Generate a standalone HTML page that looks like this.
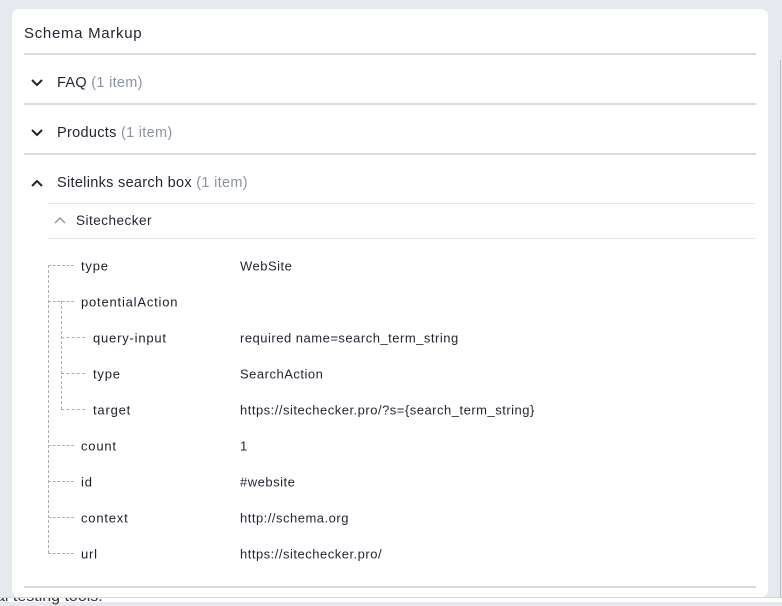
<!DOCTYPE html>
<html><head><style>
body{margin:0;width:782px;height:601px;background:#e6e9ee;font-family:"Liberation Sans",sans-serif;position:relative;overflow:hidden;color:#1f2430}
.card{position:absolute;left:12px;top:9px;width:756px;height:588px;background:#fff;border-radius:7px}
.hl{position:absolute;left:24px;width:732px;height:2px;background:#d8dbe1}
.sl{position:absolute;left:48px;width:708px;height:1px;background:#e6e8eb}
.t{position:absolute;font-size:14.5px;white-space:nowrap;letter-spacing:0.3px}
.g{color:#8a93a3}
.k{position:absolute;font-size:13px;white-space:nowrap;transform:translateY(-50%);letter-spacing:0.8px;color:#1a1f2b}
.v{position:absolute;left:240px;font-size:13px;white-space:nowrap;transform:translateY(-50%);letter-spacing:0.5px}
.dv{position:absolute;border-left:1px dashed #a9b0bb;width:0}
.dh{position:absolute;border-top:1px dashed #a9b0bb;height:0}
svg{position:absolute}
</style></head><body>
<div class="card"></div>
<div class="t" style="left:24px;top:25px;font-size:15px;letter-spacing:0.7px">Schema Markup</div>
<div class="hl" style="top:53px"></div>
<svg style="left:30px;top:77px" width="14" height="12"><path d="M2 3l5 5 5-5" stroke="#1f2430" stroke-width="2" fill="none"/></svg>
<div class="t" style="left:57px;top:75px">FAQ <span class="g">(1 item)</span></div>
<div class="hl" style="top:103px"></div>
<svg style="left:30px;top:127px" width="14" height="12"><path d="M2 3l5 5 5-5" stroke="#1f2430" stroke-width="2" fill="none"/></svg>
<div class="t" style="left:57px;top:125px">Products <span class="g">(1 item)</span></div>
<div class="hl" style="top:153px"></div>
<svg style="left:30px;top:177px" width="14" height="12"><path d="M2 9l5-5 5 5" stroke="#1f2430" stroke-width="2" fill="none"/></svg>
<div class="t" style="left:57px;top:175px">Sitelinks search box <span class="g">(1 item)</span></div>
<div class="sl" style="top:203px"></div>
<svg style="left:53px;top:215px" width="14" height="12"><path d="M2 8l5-5 5 5" stroke="#9aa2ae" stroke-width="1.6" fill="none"/></svg>
<div class="t" style="left:76px;top:213px;font-size:13.5px;letter-spacing:0.5px">Sitechecker</div>
<div class="sl" style="top:238px"></div>

<div class="dv" style="left:48px;top:265px;height:288px"></div>
<div class="dv" style="left:61px;top:301px;height:108px"></div>
<div class="dh" style="left:48px;top:265px;width:26px"></div>
<div class="dh" style="left:48px;top:301px;width:26px"></div>
<div class="dh" style="left:61px;top:337px;width:24px"></div>
<div class="dh" style="left:61px;top:373px;width:24px"></div>
<div class="dh" style="left:61px;top:409px;width:24px"></div>
<div class="dh" style="left:48px;top:445px;width:26px"></div>
<div class="dh" style="left:48px;top:481px;width:26px"></div>
<div class="dh" style="left:48px;top:517px;width:26px"></div>
<div class="dh" style="left:48px;top:553px;width:26px"></div>

<div class="k" style="left:81px;top:266px">type</div><div class="v" style="top:266px">WebSite</div>
<div class="k" style="left:81px;top:302px">potentialAction</div>
<div class="k" style="left:93px;top:338px">query-input</div><div class="v" style="top:338px">required name=search_term_string</div>
<div class="k" style="left:93px;top:374px">type</div><div class="v" style="top:374px">SearchAction</div>
<div class="k" style="left:93px;top:410px">target</div><div class="v" style="top:410px">https://sitechecker.pro/?s={search_term_string}</div>
<div class="k" style="left:81px;top:446px">count</div><div class="v" style="top:446px">1</div>
<div class="k" style="left:81px;top:482px">id</div><div class="v" style="top:482px">#website</div>
<div class="k" style="left:81px;top:518px">context</div><div class="v" style="top:518px">http://schema.org</div>
<div class="k" style="left:81px;top:554px">url</div><div class="v" style="top:554px">https://sitechecker.pro/</div>

<div class="hl" style="top:586px"></div>
<div style="position:absolute;left:0;top:597px;width:782px;height:4px;background:#fff;border-top:1px solid #d8d8d0"></div>
<div style="position:absolute;left:-4px;top:588px;font-size:16px;color:#333;clip-path:inset(10px 0 0 0)">al testing tools.</div>
<div style="position:absolute;left:780px;top:60px;width:1px;height:537px;background:#b8bcc4"></div>
</body></html>
